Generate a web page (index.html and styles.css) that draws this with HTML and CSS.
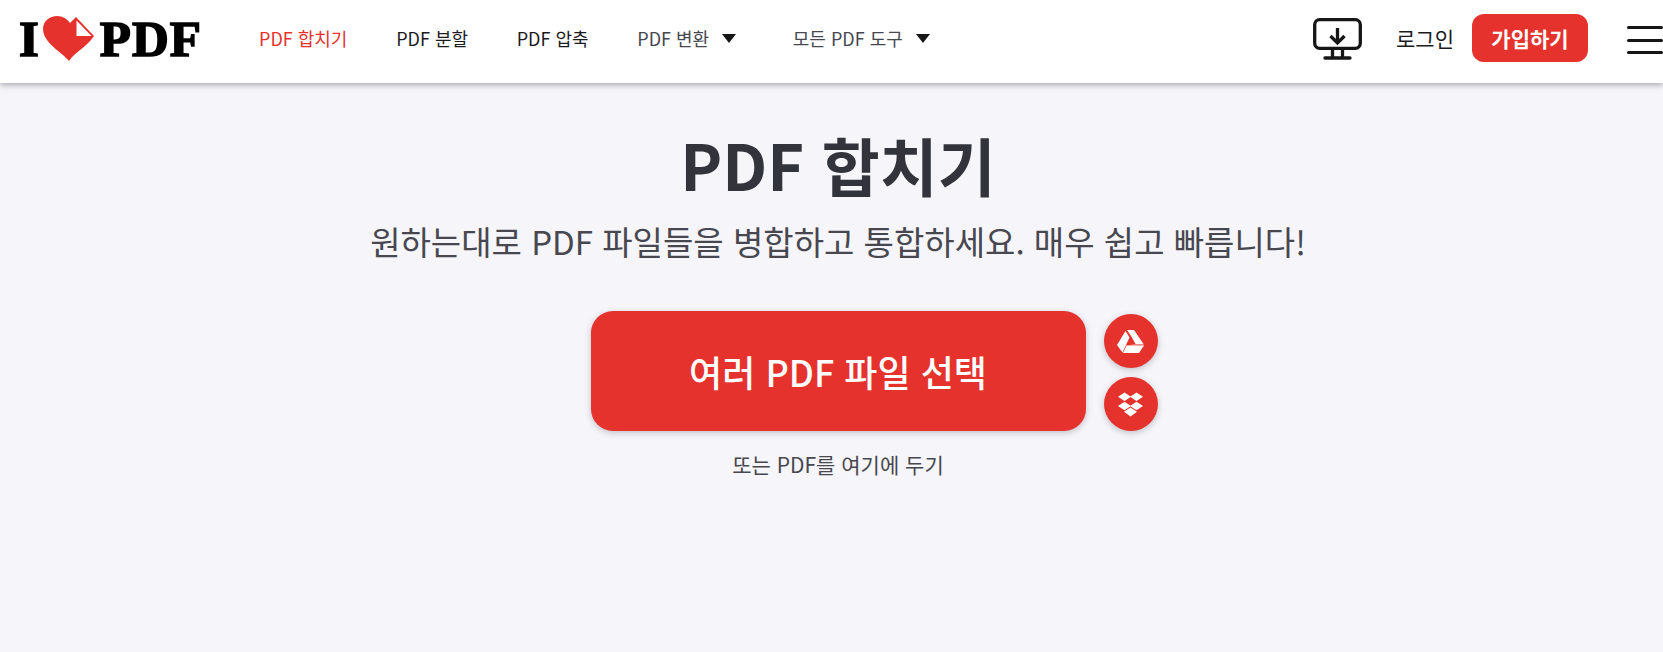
FILE: index.html
```html
<!DOCTYPE html>
<html lang="ko">
<head>
<meta charset="utf-8">
<title>PDF 합치기</title>
<link rel="stylesheet" href="styles.css">
</head>
<body>
<header class="header">
  <a class="logo">
    <span class="logo-text logo-i">I</span>
    <svg class="logo-heart" viewBox="0 0 52 46" width="52" height="46">
      <path d="M26 45 C20 37 0 27 0 13 C0 5 7 0 14 0 C20 0 24 3 27 7 L33 1 L51 20 C44 31 32 36 26 45 Z" fill="#e5322d"/>
      <path d="M33.500 4.500 L33.500 20 L48.500 20 Z" fill="#fff"/>
    </svg>
    <span class="logo-text">PDF</span>
  </a>
  <nav class="nav">
    <a class="nav-link active">PDF 합치기</a>
    <a class="nav-link">PDF 분할</a>
    <a class="nav-link">PDF 압축</a>
    <a class="nav-link muted convert">PDF 변환<span class="caret"></span></a>
    <a class="nav-link muted">모든 PDF 도구<span class="caret"></span></a>
  </nav>
  <div class="header-right">
    <svg class="desktop" viewBox="0 0 50 44" width="50" height="44">
      <rect x="1.700" y="3.700" width="45.600" height="28.600" rx="5" fill="none" stroke="#161616" stroke-width="3.300"/>
      <path d="M24.500 12 V26 M17.500 20 L24.500 27 L31.500 20" fill="none" stroke="#161616" stroke-width="3.300"/>
      <path d="M19.500 33 V41 M29.500 33 V41 M12 42 H37" fill="none" stroke="#161616" stroke-width="3.300" stroke-linecap="round"/>
    </svg>
    <a class="login">로그인</a>
    <a class="signup">가입하기</a>
    <div class="burger"><span></span><span></span><span></span></div>
  </div>
</header>
<main class="main">
  <h1 class="title">PDF 합치기</h1>
  <h2 class="subtitle">원하는대로 PDF 파일들을 병합하고 통합하세요. 매우 쉽고 빠릅니다!</h2>
  <div class="upload">
    <a class="select-btn">여러 PDF 파일 선택</a>
    <div class="cloud">
      <a class="cloud-btn">
        <svg viewBox="0 0 27 23" width="27" height="23">
          <path d="M10 0 H17 L26.500 14 H18.500 L14 6 Z" fill="#fff"/>
          <path d="M8.500 1 L12.500 7.500 L5.500 22.500 L0 15 Z" fill="#fff"/>
          <path d="M9.500 15.500 H27 L22 23 H6 Z" fill="#fff"/>
          <path d="M18.800 14 H26.500 L27 15.500 H9.500 Z" fill="#fff" opacity=".45"/>
        </svg>
      </a>
      <a class="cloud-btn">
        <svg viewBox="0 0 27 25" width="27" height="25">
          <path d="M7.500 0.500 L14 4.800 L7.500 9 L1 4.800 Z M19.500 0.500 L26 4.800 L19.500 9 L13 4.800 Z M7.500 9.800 L14 14 L7.500 18.300 L1 14 Z M19.500 9.800 L26 14 L19.500 18.300 L13 14 Z M13.500 15.500 L20 19.700 L13.500 24.500 L7 19.700 Z" fill="#fff"/>
        </svg>
      </a>
    </div>
  </div>
  <p class="drop">또는 PDF를 여기에 두기</p>
</main>
</body>
</html>
```
FILE: styles.css
```css
* { box-sizing: border-box; }
html, body { margin: 0; height: 100%; overflow: hidden; }
body {
  background: #f5f5fa;
  color: #33333b;
  font-family: "Noto Sans CJK KR", "Noto Sans", sans-serif;
}
.header {
  display: flex;
  align-items: center;
  height: 83px;
  padding: 0 0 8px 19px;
  background: #fff;
  box-shadow: 0 2px 6px rgba(72, 72, 84, .45);
}
.logo { display: flex; align-items: center; width: 240px; flex: none; margin-top: 3px; }
.logo-text {
  font-family: "Liberation Serif", serif;
  font-weight: 700;
  font-size: 51px;
  line-height: 46px;
  color: #000;
  letter-spacing: 1px;
  -webkit-text-stroke: 1.6px #000;
}
.logo-i { margin-right: 4px; letter-spacing: 0; }
.logo-heart { margin: 0 5px 0 0; }
.nav { display: flex; align-items: center; gap: 48.700px; }
.nav-link { font-size: 18px; line-height: 24px; color: #1b1b1f; white-space: nowrap; }
.nav-link.active { color: #e5322d; }
.nav-link.muted { color: #47474f; }
.convert { margin-right: 8px; }
.caret {
  display: inline-block;
  margin-left: 13px;
  vertical-align: 3px;
  border-left: 7px solid transparent;
  border-right: 7px solid transparent;
  border-top: 9px solid #161616;
}
.header-right { display: flex; align-items: center; margin-left: auto; }
.desktop { margin-right: 33px; }
.login { font-size: 21px; color: #1b1b1f; margin-right: 18px; }
.signup {
  display: flex;
  align-items: center;
  justify-content: center;
  width: 116px;
  height: 48px;
  background: #e5322d;
  border-radius: 12px;
  color: #fff;
  font-size: 21px;
  font-weight: 700;
  margin-right: 39px;
}
.burger { display: flex; flex-direction: column; gap: 9.500px; width: 36px; margin-top: 5px; }
.burger span { display: block; height: 3px; background: #161616; border-radius: 2px; }
.main {
  display: flex;
  flex-direction: column;
  align-items: center;
  padding: 41px 0 0 13px;
}
.title { margin: 0; font-size: 63px; line-height: 80px; font-weight: 700; color: #33333b; }
.subtitle { margin: 13px 0 0; font-size: 33px; line-height: 48px; font-weight: 400; color: #47474f; }
.upload { position: relative; margin-top: 46px; }
.select-btn {
  display: flex;
  align-items: center;
  justify-content: center;
  width: 495px;
  height: 120px;
  background: #e5322d;
  border-radius: 22px;
  color: #fff;
  font-size: 36px;
  font-weight: 500;
  box-shadow: 0 2px 6px rgba(72, 72, 84, .3);
}
.cloud {
  position: absolute;
  left: 513px;
  top: 3px;
  display: flex;
  flex-direction: column;
  gap: 9px;
}
.cloud-btn {
  display: flex;
  align-items: center;
  justify-content: center;
  width: 54px;
  height: 54px;
  border-radius: 50%;
  background: #e5322d;
  box-shadow: 0 2px 6px rgba(72, 72, 84, .3);
}
.drop { margin: 18px 0 0; font-size: 21px; line-height: 30px; color: #47474f; }
```
